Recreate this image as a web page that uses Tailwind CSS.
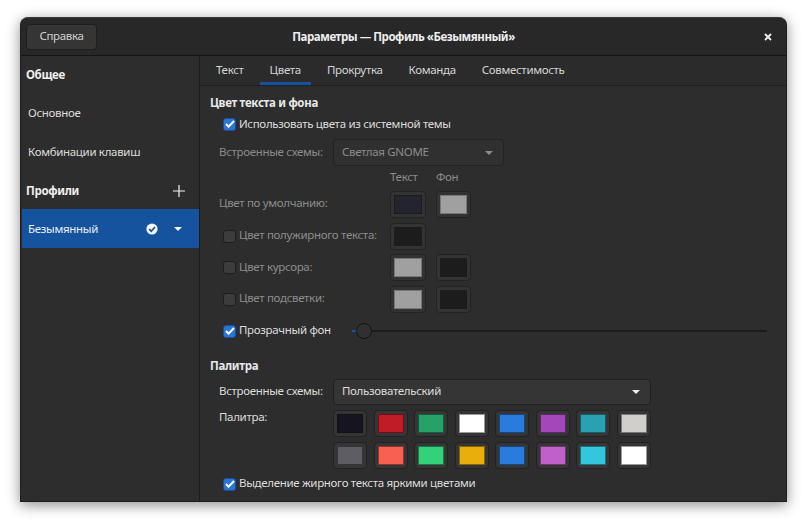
<!DOCTYPE html>
<html lang="ru">
<head>
  <meta charset="UTF-8">
  <title>Параметры — Профиль «Безымянный»</title>
  <script src="https://cdn.jsdelivr.net/npm/@tailwindcss/browser@4"></script>
</head>
<body class="bg-white w-[807px] h-[525px] overflow-hidden pt-[17px] pl-[20px] font-['Noto_Sans',sans-serif] text-[11.5px] tracking-[-0.32px] text-[#dcdcdc] whitespace-nowrap">
  <div class="w-[767px] h-[485px] flex flex-col bg-[#2d2d2d] rounded-t-[8px] border border-[#1e1e1e] border-t-[#3a3a3a] shadow-[0_3px_14px_rgba(0,0,0,0.45)] overflow-hidden">

    <!-- header -->
    <header class="h-[38px] shrink-0 grid grid-cols-[1fr_auto_1fr] items-center bg-[#282828] border-b border-[#141414]">
      <button class="ml-[5px] w-[71px] h-[26px] pb-[2px] rounded-[4px] bg-[#353535] border border-[#1e1e1e] text-[#d0d0d0] leading-none">Справка</button>
      <div class="font-bold tracking-[-0.45px] text-[#eeeeee]">Параметры — Профиль «Безымянный»</div>
      <svg class="justify-self-end mr-[14px]" width="8" height="8" viewBox="0 0 8 8"><path d="M1 1l6 6M7 1l-6 6" stroke="#f2f2f2" stroke-width="1.8"/></svg>
    </header>

    <div class="flex-1 flex min-h-0">
      <!-- sidebar -->
      <aside class="w-[179px] shrink-0 border-r border-[#1c1c1c] bg-[#2d2d2d] flex flex-col">
        <div class="h-[38px] pl-[5px] flex items-center font-bold text-[#f0f0f0]">Общее</div>
        <div class="h-[39px] pl-[7px] pb-[2px] flex items-center">Основное</div>
        <div class="h-[39px] pl-[7px] pb-[2px] flex items-center">Комбинации клавиш</div>
        <div class="h-[38px] pl-[5px] pr-[14px] flex items-center justify-between font-bold text-[#f0f0f0]">
          <span>Профили</span>
          <svg width="12" height="12" viewBox="0 0 12 12"><path d="M6 0v12M0 6h12" stroke="#f4f4f4" stroke-width="1.2"/></svg>
        </div>
        <div class="h-[39px] ml-[1px] -mt-[1px] pl-[6px] pr-[17px] flex items-center bg-[#15539e] text-[#e8eef6]">
          <span class="flex-1">Безымянный</span>
          <svg class="mr-[16px]" width="12" height="12" viewBox="0 0 12 12"><circle cx="6" cy="6" r="5.6" fill="#f4f4f4"/><path d="M3.2 6.2l2 2 3.8-4.2" fill="none" stroke="#15539e" stroke-width="1.7"/></svg>
          <svg width="8" height="4" viewBox="0 0 8 4"><path d="M0 0h8L4 4z" fill="#f4f4f4"/></svg>
        </div>
      </aside>

      <!-- content -->
      <main class="flex-1 min-w-0 flex flex-col">
        <nav class="h-[30px] shrink-0 flex gap-[6px] border-b border-[#202020] bg-[#2b2b2b] pl-[6px] text-[#d4d4d4]">
          <div class="px-[10px] pb-[2px] flex items-center">Текст</div>
          <div class="px-[10px] flex items-center border-b-[3px] border-[#15539e] pt-[1px]">Цвета</div>
          <div class="px-[10px] pb-[2px] flex items-center">Прокрутка</div>
          <div class="px-[10px] pb-[2px] flex items-center">Команда</div>
          <div class="px-[10px] pb-[2px] flex items-center">Совместимость</div>
        </nav>

        <div class="pl-[10px] pt-[9px] flex flex-col">
          <h2 class="h-[18px] pb-[2px] flex items-center font-bold text-[#e8e8e8]">Цвет текста и фона</h2>
          <label class="h-[24px] -mt-[1px] pl-[13px] flex items-center gap-[3px]">
            <span class="w-[13px] h-[13px] rounded-[3px] bg-[#2a76d6] border border-[#1a4f96] flex items-center justify-center">
              <svg width="10" height="8" viewBox="0 0 10 8"><path d="M1 4l2.6 2.6L9 1" fill="none" stroke="#fff" stroke-width="2"/></svg>
            </span>
            Использовать цвета из системной темы
          </label>

          <div class="h-[27px] mt-[3px] pl-[9px] flex items-center text-[#8c8c8c]">
            <span class="w-[114px] pb-[2px]">Встроенные схемы:</span>
            <div class="w-[171px] h-[27px] rounded-[4px] border border-[#232323] bg-[#303030] pl-[8px] pr-[10px] flex items-center justify-between">
              <span class="pb-[2px]">Светлая GNOME</span>
              <svg width="8" height="4" viewBox="0 0 8 4"><path d="M0 0h8L4 4z" fill="#8c8c8c"/></svg>
            </div>
          </div>

          <div class="h-[20px] mt-[2px] pb-[2px] flex items-center text-[#8c8c8c]">
            <span class="ml-[180px] w-[46px]">Текст</span>
            <span>Фон</span>
          </div>

          <!-- disabled colour rows -->
          <div class="h-[32px] pl-[9px] flex items-center text-[#8c8c8c]">
            <span class="w-[171px] pb-[2px]">Цвет по умолчанию:</span>
            <div class="w-[36px] h-[27px] rounded-[4px] border border-[#222] bg-[#333] p-[3px]"><div class="h-full bg-[#24242e] border border-[#1c1c1c]"></div></div>
            <div class="w-[35px] h-[27px] ml-[10px] rounded-[4px] border border-[#222] bg-[#333] p-[3px]"><div class="h-full bg-[#a0a0a0] border border-[#777]"></div></div>
          </div>
          <div class="h-[32px] pl-[13px] flex items-center gap-[3px] text-[#8c8c8c]">
            <span class="w-[13px] h-[13px] rounded-[3px] bg-[#3c3c3c] border border-[#1e1e1e]"></span>
            <span class="w-[148px] pb-[2px]">Цвет полужирного текста:</span>
            <div class="w-[36px] h-[27px] rounded-[4px] border border-[#222] bg-[#333] p-[3px]"><div class="h-full bg-[#1c1c1c]"></div></div>
          </div>
          <div class="h-[31px] pl-[13px] flex items-center gap-[3px] text-[#8c8c8c]">
            <span class="w-[13px] h-[13px] rounded-[3px] bg-[#3c3c3c] border border-[#1e1e1e]"></span>
            <span class="w-[148px] pb-[2px]">Цвет курсора:</span>
            <div class="w-[36px] h-[27px] rounded-[4px] border border-[#222] bg-[#333] p-[3px]"><div class="h-full bg-[#a0a0a0] border border-[#777]"></div></div>
            <div class="w-[35px] h-[27px] ml-[7px] rounded-[4px] border border-[#222] bg-[#333] p-[3px]"><div class="h-full bg-[#1c1c1c]"></div></div>
          </div>
          <div class="h-[32px] pl-[13px] flex items-center gap-[3px] text-[#8c8c8c]">
            <span class="w-[13px] h-[13px] rounded-[3px] bg-[#3c3c3c] border border-[#1e1e1e]"></span>
            <span class="w-[148px] pb-[2px]">Цвет подсветки:</span>
            <div class="w-[36px] h-[27px] rounded-[4px] border border-[#222] bg-[#333] p-[3px]"><div class="h-full bg-[#a0a0a0] border border-[#777]"></div></div>
            <div class="w-[35px] h-[27px] ml-[7px] rounded-[4px] border border-[#222] bg-[#333] p-[3px]"><div class="h-full bg-[#1c1c1c]"></div></div>
          </div>

          <!-- transparency -->
          <div class="h-[32px] pl-[13px] flex items-center">
            <span class="w-[13px] h-[13px] rounded-[3px] bg-[#2a76d6] border border-[#1a4f96] flex items-center justify-center">
              <svg width="10" height="8" viewBox="0 0 10 8"><path d="M1 4l2.6 2.6L9 1" fill="none" stroke="#fff" stroke-width="2"/></svg>
            </span>
            <span class="ml-[3px] w-[113px] pb-[2px]">Прозрачный фон</span>
            <div class="w-[415px] h-[16px] relative flex items-center">
              <div class="w-full h-[2px] bg-[#1c1c1c]"></div>
              <div class="absolute left-0 w-[6px] h-[2px] bg-[#15539e]"></div>
              <div class="absolute left-[4px] w-[16px] h-[16px] rounded-full bg-[#303030] border border-[#141414]"></div>
            </div>
          </div>

          <h2 class="h-[18px] mt-[11px] pb-[2px] flex items-center font-bold text-[#e8e8e8]">Палитра</h2>
          <div class="h-[26px] mt-[3px] pl-[9px] flex items-center">
            <span class="w-[114px] pb-[2px]">Встроенные схемы:</span>
            <div class="w-[318px] h-[26px] rounded-[4px] border border-[#202020] bg-[#353535] pl-[8px] pr-[10px] flex items-center justify-between">
              <span class="pb-[2px]">Пользовательский</span>
              <svg width="8" height="4" viewBox="0 0 8 4"><path d="M0 0h8L4 4z" fill="#eeeeee"/></svg>
            </div>
          </div>

          <div class="mt-[5px] pl-[9px] flex">
            <span class="w-[114px] leading-[14px]">Палитра:</span>
            <div class="w-[318px] grid grid-cols-8 gap-x-[6.5px] gap-y-[5px]">
              <div class="h-[27px] rounded-[4px] border border-[#222] bg-[#353535] p-[3px]"><div class="h-full bg-[#171421] border border-[#111]"></div></div>
              <div class="h-[27px] rounded-[4px] border border-[#222] bg-[#353535] p-[3px]"><div class="h-full bg-[#c01c28] border border-[#6e1018]"></div></div>
              <div class="h-[27px] rounded-[4px] border border-[#222] bg-[#353535] p-[3px]"><div class="h-full bg-[#26a269] border border-[#165c3c]"></div></div>
              <div class="h-[27px] rounded-[4px] border border-[#222] bg-[#353535] p-[3px]"><div class="h-full bg-white border border-[#999]"></div></div>
              <div class="h-[27px] rounded-[4px] border border-[#222] bg-[#353535] p-[3px]"><div class="h-full bg-[#2a7bde] border border-[#18467f]"></div></div>
              <div class="h-[27px] rounded-[4px] border border-[#222] bg-[#353535] p-[3px]"><div class="h-full bg-[#a347ba] border border-[#5d286a]"></div></div>
              <div class="h-[27px] rounded-[4px] border border-[#222] bg-[#353535] p-[3px]"><div class="h-full bg-[#2aa1b3] border border-[#185c66]"></div></div>
              <div class="h-[27px] rounded-[4px] border border-[#222] bg-[#353535] p-[3px]"><div class="h-full bg-[#d0cfcc] border border-[#777]"></div></div>
              <div class="h-[27px] rounded-[4px] border border-[#222] bg-[#353535] p-[3px]"><div class="h-full bg-[#5e5c64] border border-[#363539]"></div></div>
              <div class="h-[27px] rounded-[4px] border border-[#222] bg-[#353535] p-[3px]"><div class="h-full bg-[#f66151] border border-[#8c372e]"></div></div>
              <div class="h-[27px] rounded-[4px] border border-[#222] bg-[#353535] p-[3px]"><div class="h-full bg-[#33d17a] border border-[#1d7746]"></div></div>
              <div class="h-[27px] rounded-[4px] border border-[#222] bg-[#353535] p-[3px]"><div class="h-full bg-[#e9ad0c] border border-[#856307]"></div></div>
              <div class="h-[27px] rounded-[4px] border border-[#222] bg-[#353535] p-[3px]"><div class="h-full bg-[#2a7bde] border border-[#18467f]"></div></div>
              <div class="h-[27px] rounded-[4px] border border-[#222] bg-[#353535] p-[3px]"><div class="h-full bg-[#c061cb] border border-[#6e3774]"></div></div>
              <div class="h-[27px] rounded-[4px] border border-[#222] bg-[#353535] p-[3px]"><div class="h-full bg-[#33c7de] border border-[#1d717f]"></div></div>
              <div class="h-[27px] rounded-[4px] border border-[#222] bg-[#353535] p-[3px]"><div class="h-full bg-white border border-[#999]"></div></div>
            </div>
          </div>

          <label class="h-[24px] mt-[3px] pl-[13px] flex items-center gap-[3px]">
            <span class="w-[13px] h-[13px] rounded-[3px] bg-[#2a76d6] border border-[#1a4f96] flex items-center justify-center">
              <svg width="10" height="8" viewBox="0 0 10 8"><path d="M1 4l2.6 2.6L9 1" fill="none" stroke="#fff" stroke-width="2"/></svg>
            </span>
            <span class="pb-[2px]">Выделение жирного текста яркими цветами</span>
          </label>
        </div>
      </main>
    </div>
  </div>
</body>
</html>
